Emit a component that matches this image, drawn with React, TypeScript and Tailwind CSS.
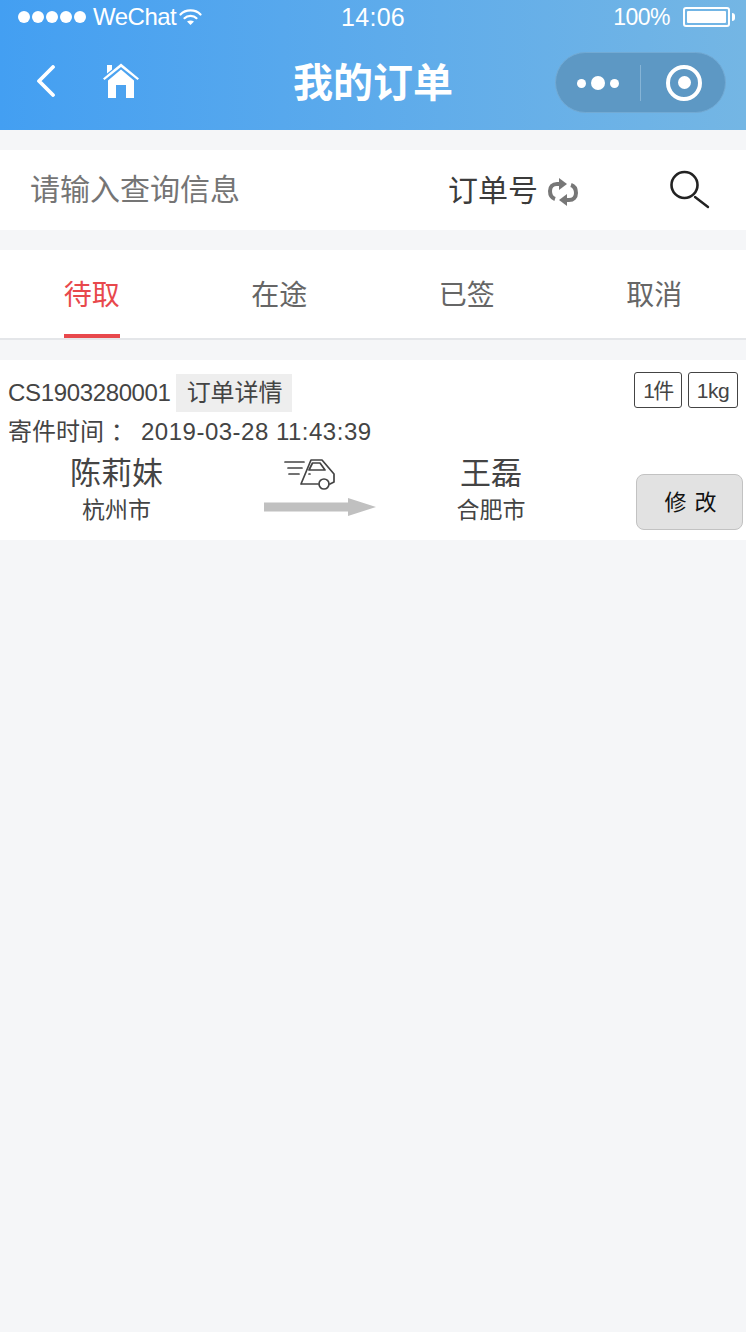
import { useState } from 'react';

const FONT = "font-['Helvetica_Neue','Liberation_Sans','Noto_Sans_CJK_SC',sans-serif]";

const tabs = ['待取', '在途', '已签', '取消'];

const WifiIcon = () => (
    <svg width="23" height="18" viewBox="0 0 23 18" fill="none" stroke="white" strokeLinecap="round">
        <path d="M1.5 6.5 C6.5 1 16.5 1 21.5 6.5" strokeWidth="2.2" />
        <path d="M5.5 10.2 C8.5 7 14.5 7 17.5 10.2" strokeWidth="2.2" />
        <path d="M11.5 17 L8 13.5 C10 12 13 12 15 13.5 Z" fill="white" stroke="none" />
    </svg>
);

const HomeIcon = () => (
    <svg width="38" height="38" viewBox="0 0 38 38" fill="white">
        <path d="M19 1.5 L37 16.5 L35.5 18 L19 5 L2.5 18 L1 16.5 Z" />
        <path d="M5 3 L10 3 L10 7.5 L5 11.5 Z" />
        <path d="M19 7.5 L32 18.5 L32 36 L24 36 L24 23 L14 23 L14 36 L6 36 L6 18.5 Z" />
    </svg>
);

const SwitchIcon = () => (
    <svg width="30" height="28" viewBox="0 0 30 28" fill="none" stroke="#777" strokeWidth="4">
        <path d="M12 6 L9 6 C4.5 6 2 9 2 13 C2 17 4 20 7 21" />
        <path d="M18 22 L21 22 C25.5 22 28 19 28 15 C28 11 26 8 23 7" />
        <path d="M11 0 L19 6 L11 12 Z" fill="#777" stroke="none" />
        <path d="M19 16 L11 22 L19 28 Z" fill="#777" stroke="none" />
    </svg>
);

const SearchIcon = () => (
    <svg width="40" height="40" viewBox="0 0 40 40" fill="none" stroke="#222">
        <circle cx="14.5" cy="15" r="13" strokeWidth="2.6" />
        <path d="M25 27 L38 37" strokeWidth="2.4" strokeLinecap="round" />
    </svg>
);

const CarIcon = () => (
    <svg width="52" height="32" viewBox="0 0 52 32" fill="none" stroke="#444" strokeWidth="1.7" strokeLinecap="round" strokeLinejoin="round">
        <path d="M1 4 L20 4 M4 10 L18 10 M5 16 L15 16" />
        <path d="M17 26 L27 2 L38 2 L50 16 L50 24 L46 26 M34 26 L17 26" />
        <path d="M25 12 L28.5 5 L36 5 L41 12 Z" />
        <path d="M25 16 L26 16" />
        <circle cx="40" cy="26" r="5" />
    </svg>
);

const ArrowIcon = () => (
    <svg width="112" height="18" viewBox="0 0 112 18" fill="#c0c0c0">
        <path d="M0 4.5 L84 4.5 L84 0 L112 9 L84 18 L84 13.5 L0 13.5 Z" />
    </svg>
);

const Header = () => (
    <div className="h-[130px] bg-gradient-to-r from-[#439ff2] to-[#74b6e4] text-white">
        <div className="h-[34px] flex items-center justify-between pl-[18px] pr-[11px] relative">
            <div className="flex items-center w-[220px]">
                <div className="flex gap-[2px] mr-[7px]">
                    {[0, 1, 2, 3, 4].map((i) => (
                        <span key={i} className="w-[12px] h-[12px] rounded-full bg-white" />
                    ))}
                </div>
                <span className="text-[24px] leading-none tracking-[-0.5px]">WeChat</span>
                <div className="ml-[3px]">
                    <WifiIcon />
                </div>
            </div>
            <span className="text-[25px] leading-none absolute left-[341px] tracking-[0.3px]">14:06</span>
            <div className="flex items-center gap-[13px]">
                <span className="text-[23px] leading-none tracking-[-0.5px]">100%</span>
                <div className="flex items-center gap-[2px]">
                    <div className="w-[47px] h-[20px] rounded-[3px] border-2 border-white p-[2px]">
                        <div className="w-full h-full bg-white rounded-[1px]" />
                    </div>
                    <div className="w-[3px] h-[8px] bg-white rounded-r-sm" />
                </div>
            </div>
        </div>
        <div className="h-[96px] flex items-center relative pb-[2px]">
            <svg width="20" height="32" viewBox="0 0 20 32" fill="none" stroke="white" strokeWidth="3.8" strokeLinecap="round" strokeLinejoin="round" className="ml-[36px]">
                <path d="M17 2 L3 16 L17 30" />
            </svg>
            <div className="ml-[46px]">
                <HomeIcon />
            </div>
            <h1 className="absolute inset-x-0 text-center text-[40px] leading-none font-bold pt-[3px]">我的订单</h1>
            <div className="absolute right-[20px] top-[18px] w-[171px] h-[61px] rounded-full bg-[#5d98c4] border border-[#72aad4] flex items-center">
                <div className="w-[84px] flex items-center justify-center gap-[5px] pt-[1px]">
                    <span className="w-[9px] h-[9px] rounded-full bg-white" />
                    <span className="w-[14px] h-[14px] rounded-full bg-white" />
                    <span className="w-[9px] h-[9px] rounded-full bg-white" />
                </div>
                <div className="w-px h-[36px] bg-[#86b4d6]" />
                <div className="flex-1 flex items-center justify-center pl-[2px]">
                    <div className="w-[36px] h-[36px] rounded-full border-[4px] border-white flex items-center justify-center">
                        <div className="w-[13px] h-[13px] rounded-full bg-white" />
                    </div>
                </div>
            </div>
        </div>
    </div>
);

const SearchBar = () => (
    <div className="mt-[20px] h-[80px] bg-white flex items-center">
        <span className="ml-[30px] w-[418px] text-[30px] text-[#757575] leading-none">请输入查询信息</span>
        <span className="text-[30px] text-[#3b3b3b] leading-none mt-[2px] w-[90px]">订单号</span>
        <div className="ml-[10px] mt-[3px]">
            <SwitchIcon />
        </div>
        <div className="ml-[92px] mb-[1px]">
            <SearchIcon />
        </div>
    </div>
);

const Tabs = () => {
    const [active, setActive] = useState(0);

    return (
        <div className="mt-[20px] h-[90px] bg-white border-b-2 border-[#e4e6e9] overflow-hidden">
            <div className="w-[750px] ml-[-2px] h-full grid grid-cols-4">
                {tabs.map((tab, i) => (
                    <div
                        key={tab}
                        onClick={() => setActive(i)}
                        className={`relative flex items-center justify-center text-[28px] leading-none pt-[3px] ${
                            active === i ? 'text-[#e8484c]' : 'text-[#666]'
                        }`}
                    >
                        {tab}
                        {active === i && <div className="absolute bottom-0 w-[56px] h-[4px] bg-[#e8484c]" />}
                    </div>
                ))}
            </div>
        </div>
    );
};

const OrderCard = () => (
    <div className="mt-[20px] h-[180px] bg-white text-[#444] relative pt-[14px]">
        <div className="h-[38px] flex items-center pl-[8px]">
            <span className="text-[24px] leading-none tracking-[-0.35px]">CS1903280001</span>
            <span className="ml-[5px] h-[38px] pl-[11px] pr-[9px] bg-[#eeeeee] text-[24px] leading-[38px]">订单详情</span>
            <div className="absolute right-[8px] top-[12px] flex gap-[6px] text-[21px] leading-none">
                <span className="w-[48px] h-[36px] rounded-[3px] border border-[#444] flex items-center justify-center tracking-[-1.5px]">1件</span>
                <span className="w-[50px] h-[36px] rounded-[3px] border border-[#444] flex items-center justify-center tracking-[-0.5px]">1kg</span>
            </div>
        </div>
        <div className="h-[40px] flex items-center pl-[8px] text-[24px] leading-none">
            <span className="w-[133px]">寄件时间 ：</span>
            <span className="tracking-[0.5px]">2019-03-28 11:43:39</span>
        </div>
        <div className="grid grid-cols-[233px_174px_168px] pt-[2px]">
            <div className="flex flex-col items-center">
                <span className="text-[31px] leading-[40px]">陈莉妹</span>
                <span className="text-[23px] leading-[32px]">杭州市</span>
            </div>
            <div className="flex flex-col items-center">
                <div className="h-[44px] pt-[4px] mr-[20px]">
                    <CarIcon />
                </div>
                <ArrowIcon />
            </div>
            <div className="flex flex-col items-center">
                <span className="text-[31px] leading-[40px]">王磊</span>
                <span className="text-[23px] leading-[32px]">合肥市</span>
            </div>
        </div>
        <button className="absolute right-[3px] top-[114px] w-[107px] h-[56px] rounded-[8px] bg-[#e2e2e2] border border-[#c2c2c2] text-[22px] text-[#111] tracking-[1px] pl-[3px]">
            修 改
        </button>
    </div>
);

const App = () => (
    <div className={`${FONT} w-[746px] h-[1332px] bg-[#f5f6f8] overflow-hidden`}>
        <Header />
        <SearchBar />
        <Tabs />
        <OrderCard />
    </div>
);

export default App;
